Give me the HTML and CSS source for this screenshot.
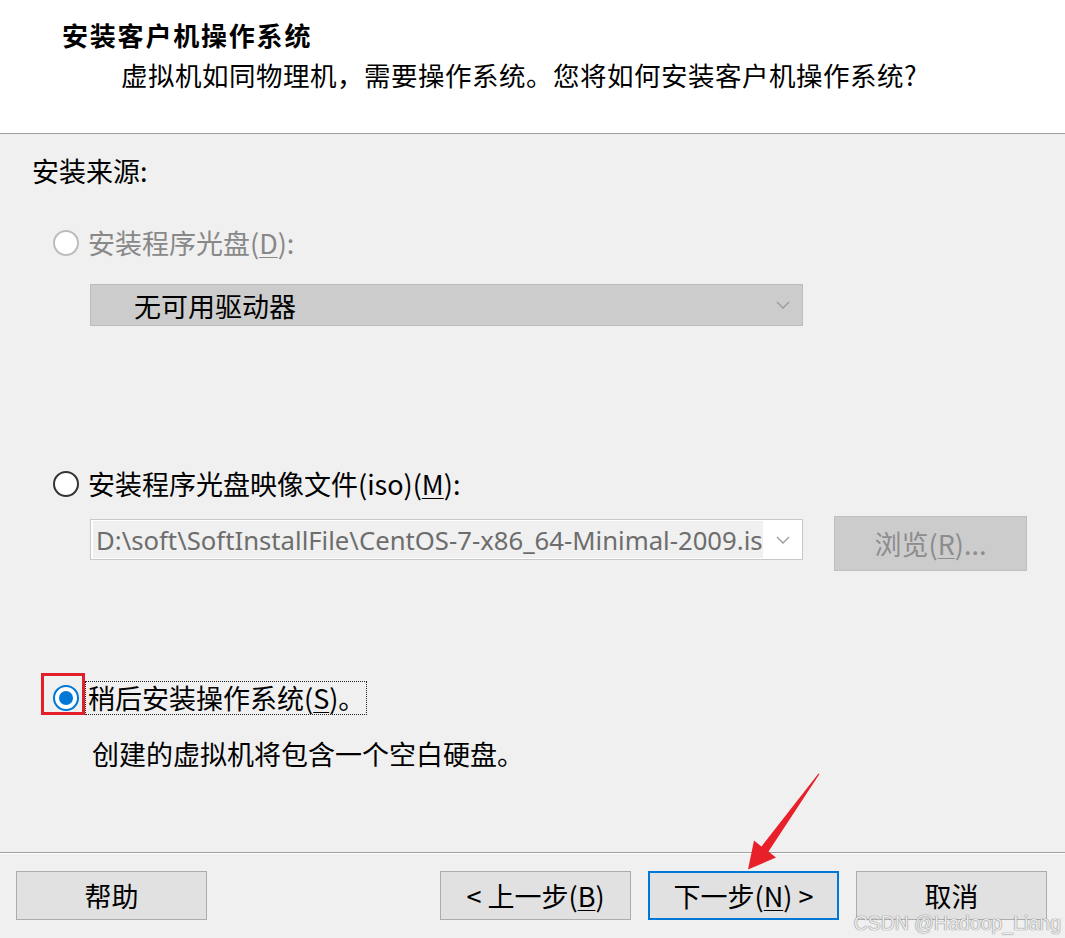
FILE: index.html
```html
<!DOCTYPE html>
<html lang="zh-CN">
<head>
<meta charset="utf-8">
<title>新建虚拟机向导</title>
<link rel="stylesheet" href="styles.css">
</head>
<body>
<div class="window">
  <div class="header">
    <div class="title">安装客户机操作系统</div>
    <div class="subtitle">虚拟机如同物理机，需要操作系统。您将如何安装客户机操作系统?</div>
  </div>
  <div class="main">
    <div class="section-label">安装来源:</div>

    <div class="option disabled opt-disc">
      <span class="radio"></span>
      <span class="label">安装程序光盘(<u>D</u>):</span>
    </div>
    <div class="combo combo-disabled">
      <span class="combo-text">无可用驱动器</span>
      <svg class="chev" width="14" height="8" viewBox="0 0 14 8"><path d="M1 1 L7 7 L13 1" fill="none" stroke="#9a9a9a" stroke-width="1.3"/></svg>
    </div>

    <div class="option opt-iso">
      <span class="radio"></span>
      <span class="label">安装程序光盘映像文件(iso)(<u>M</u>):</span>
    </div>
    <div class="iso-row">
      <div class="combo combo-iso">
        <span class="combo-text"><span class="sel">D:\soft\SoftInstallFile\CentOS-7-x86_64-Minimal-2009.iso</span></span>
        <svg class="chev" width="14" height="8" viewBox="0 0 14 8"><path d="M1 1 L7 7 L13 1" fill="none" stroke="#9a9a9a" stroke-width="1.3"/></svg>
      </div>
      <div class="btn btn-disabled browse">浏览(<u>R</u>)...</div>
    </div>

    <div class="option opt-later">
      <span class="radio checked mark"></span>
      <span class="label focus">稍后安装操作系统(<u>S</u>)。</span>
    </div>
    <div class="desc">创建的虚拟机将包含一个空白硬盘。</div>
  </div>
  <div class="footer">
    <div class="btn">帮助</div>
    <div class="spacer"></div>
    <div class="btn">&lt; 上一步(<u>B</u>)</div>
    <div class="btn default">下一步(<u>N</u>) &gt;</div>
    <div class="btn">取消</div>
  </div>

  <svg class="arrow" width="1065" height="938" viewBox="0 0 1065 938">
    <polygon points="819.5,774 768.5,851.5 776,857.5 748,869.5 754,840.5 761.5,846.5 818.5,773.5" fill="#e8202a"/>
  </svg>
  <div class="watermark">CSDN @Hadoop_Liang</div>
</div>
</body>
</html>
```

FILE: styles.css
```css
html, body {
  margin: 0;
  padding: 0;
}
body {
  background: #f0f0f0;
  font-family: "Noto Sans CJK SC", "Noto Sans", sans-serif;
  font-size: 27px;
  color: #000;
}
.window {
  position: relative;
  width: 1065px;
  height: 938px;
  display: flex;
  flex-direction: column;
  overflow: hidden;
}
.header {
  background: #fff;
  height: 134px;
  border-bottom: 1px solid #a0a0a0;
  box-sizing: border-box;
  padding-top: 17px;
}
.title {
  padding-left: 62px;
  line-height: 36px;
  font-weight: 700;
  font-size: 26px;
  letter-spacing: 1.8px;
}
.subtitle {
  margin-top: 4px;
  padding-left: 121px;
  line-height: 36px;
  font-size: 26.5px;
  letter-spacing: 0.5px;
}
.main {
  flex: 1;
  padding-left: 32px;
  padding-top: 19px;
}
.section-label {
  line-height: 36px;
}
.option {
  display: flex;
  align-items: center;
  height: 36px;
  padding-left: 21px;
}
.opt-disc { margin-top: 36px; }
.opt-iso { margin-top: 140px; }
.opt-later { margin-top: 109px; }
.radio {
  width: 26px;
  height: 26px;
  box-sizing: border-box;
  border: 2px solid #333;
  border-radius: 50%;
  background: #fff;
  flex: none;
  margin-right: 9px;
  position: relative;
}
.disabled .radio {
  border-color: #bcbcbc;
}
.disabled .label {
  color: #888;
}
.radio.checked {
  border-color: #0078d7;
}
.radio.checked::after {
  content: "";
  position: absolute;
  left: 4px;
  top: 4px;
  width: 14px;
  height: 14px;
  border-radius: 50%;
  background: #0078d7;
}
.radio.mark::before {
  content: "";
  position: absolute;
  left: -14px;
  top: -14px;
  width: 44px;
  height: 42px;
  box-sizing: border-box;
  border: 3px solid #e3202a;
}
.label {
  line-height: 36px;
  white-space: nowrap;
}
.label u {
  text-decoration-thickness: 1px;
  text-underline-offset: 3px;
}
.label.focus {
  margin-left: -3px;
  padding: 0 1px 0 2px;
  line-height: 32px;
  border: 1px dotted #222;
}
.combo {
  margin-left: 58px;
  width: 713px;
  height: 42px;
  box-sizing: border-box;
  display: flex;
  align-items: center;
  position: relative;
}
.combo-disabled {
  margin-top: 23px;
  background: #cccccc;
  border: 1px solid #bcbcbc;
}
.combo-disabled .combo-text {
  padding-left: 43px;
}
.combo-text {
  flex: 1;
  white-space: nowrap;
  overflow: hidden;
}
.chev {
  position: absolute;
  right: 12px;
  top: 16px;
}
.iso-row {
  display: flex;
  align-items: flex-start;
  margin-top: 14px;
  margin-left: 58px;
}
.combo-iso {
  margin-left: 0;
  margin-top: 3px;
  height: 41px;
  background: #fff;
  border: 1px solid #c8c8c8;
  padding-left: 2px;
}
.combo-iso .combo-text {
  font-family: "Noto Sans", "Open Sans", sans-serif;
  font-size: 25.7px;
  color: #6d6d6d;
  letter-spacing: 0;
}
.combo-iso .sel {
  display: block;
  width: 670px;
  overflow: hidden;
  white-space: nowrap;
  background: #f0f0f0;
  padding-left: 3px;
  line-height: 35px;
  padding-top: 2px;
  box-sizing: border-box;
}
.btn {
  width: 191px;
  height: 49px;
  box-sizing: border-box;
  background: #e1e1e1;
  border: 1px solid #adadad;
  display: flex;
  align-items: center;
  justify-content: center;
  white-space: nowrap;
  flex: none;
}
.btn u {
  text-decoration-thickness: 1px;
  text-underline-offset: 3px;
}
.btn.default {
  border: 2px solid #0078d7;
}
.btn-disabled {
  background: #cccccc;
  border-color: #bfbfbf;
  color: #8d8d8d;
}
.browse {
  margin-left: 31px;
  width: 193px;
  height: 55px;
}
.desc {
  margin-top: 20px;
  padding-left: 60px;
  line-height: 36px;
}
.footer {
  height: 86px;
  box-sizing: border-box;
  border-top: 1px solid #a0a0a0;
  box-shadow: inset 0 1px 0 #ffffff;
  display: flex;
  align-items: flex-start;
  padding: 18px 18px 0 16px;
  gap: 17px;
}
.spacer {
  flex: 1;
}
.arrow {
  position: absolute;
  left: 0;
  top: 0;
  pointer-events: none;
}
.watermark {
  position: absolute;
  right: 4px;
  bottom: 5px;
  font-family: "Liberation Sans", Arial, sans-serif;
  font-size: 19.5px;
  line-height: 20px;
  color: rgba(255, 255, 255, 0.85);
  text-shadow: 0 0 1px rgba(120, 120, 120, 0.9), 0 0 1px rgba(120, 120, 120, 0.9);
  pointer-events: none;
}
```
